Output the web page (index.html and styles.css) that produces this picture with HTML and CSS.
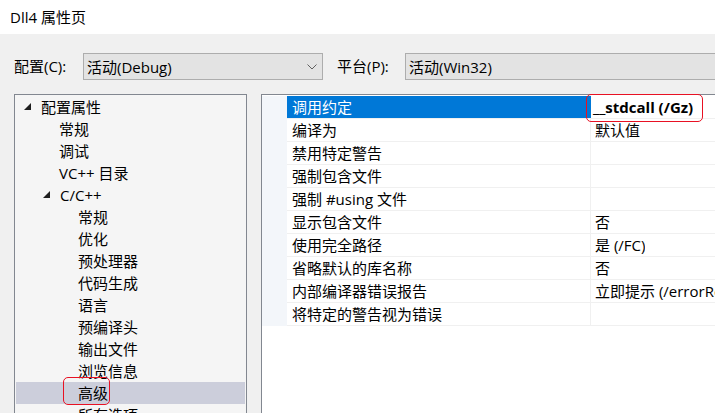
FILE: index.html
```html
<!DOCTYPE html>
<html lang="zh-CN">
<head>
<meta charset="utf-8">
<title>Dll4 属性页</title>
<link rel="stylesheet" href="styles.css">
</head>
<body>
<div class="window">
  <div class="titlebar">Dll4 属性页</div>
  <div class="main">
    <div class="config">
      <span class="label lbl-conf">配置(C):</span>
      <div class="combo combo-conf">
        <span>活动(Debug)</span>
        <svg class="chev" width="10" height="6" viewBox="0 0 10 6"><path d="M0.5 0.5 L5 5 L9.5 0.5" fill="none" stroke="#606060" stroke-width="1"/></svg>
      </div>
      <span class="label lbl-plat">平台(P):</span>
      <div class="combo combo-plat"><span>活动(Win32)</span></div>
    </div>
    <div class="panels">
      <div class="tree">
        <div class="node l0"><svg class="tri" width="8" height="8" viewBox="0 0 8 8"><polygon points="7,0 7,7 0,7" fill="#1e1e1e"/></svg>配置属性</div>
        <div class="node l1">常规</div>
        <div class="node l1">调试</div>
        <div class="node l1">VC++ 目录</div>
        <div class="node l1 exp"><svg class="tri" width="8" height="8" viewBox="0 0 8 8"><polygon points="7,0 7,7 0,7" fill="#1e1e1e"/></svg>C/C++</div>
        <div class="node l2">常规</div>
        <div class="node l2">优化</div>
        <div class="node l2">预处理器</div>
        <div class="node l2">代码生成</div>
        <div class="node l2">语言</div>
        <div class="node l2">预编译头</div>
        <div class="node l2">输出文件</div>
        <div class="node l2">浏览信息</div>
        <div class="node l2 sel">高级</div>
        <div class="node l2">所有选项</div>
        <div class="mark mark-tree"></div>
      </div>
      <div class="grid">
        <div class="row active"><div class="gut"></div><div class="name">调用约定</div><div class="val bold">__stdcall (/Gz)</div></div>
        <div class="row"><div class="gut"></div><div class="name">编译为</div><div class="val">默认值</div></div>
        <div class="row"><div class="gut"></div><div class="name">禁用特定警告</div><div class="val"></div></div>
        <div class="row"><div class="gut"></div><div class="name">强制包含文件</div><div class="val"></div></div>
        <div class="row"><div class="gut"></div><div class="name">强制 #using 文件</div><div class="val"></div></div>
        <div class="row"><div class="gut"></div><div class="name">显示包含文件</div><div class="val">否</div></div>
        <div class="row"><div class="gut"></div><div class="name">使用完全路径</div><div class="val">是 (/FC)</div></div>
        <div class="row"><div class="gut"></div><div class="name">省略默认的库名称</div><div class="val">否</div></div>
        <div class="row"><div class="gut"></div><div class="name">内部编译器错误报告</div><div class="val">立即提示 (/errorReport:prompt)</div></div>
        <div class="row"><div class="gut"></div><div class="name">将特定的警告视为错误</div><div class="val"></div></div>
        <div class="mark mark-grid"></div>
      </div>
    </div>
  </div>
</div>
</body>
</html>
```

FILE: styles.css
```css
html, body {
  margin: 0;
  padding: 0;
  overflow: hidden;
  width: 715px;
  height: 413px;
}
body {
  font-family: "Open Sans", "Noto Sans CJK SC", sans-serif;
  font-size: 15px;
  color: #000;
  background: #f0f0f0;
}
.window {
  width: 715px;
  height: 413px;
  overflow: hidden;
}
.titlebar {
  height: 34px;
  line-height: 34px;
  background: #fff;
  padding-left: 10px;
  font-size: 15px;
  color: #000;
}
.main {
  background: #f0f0f0;
  height: 379px;
}
.config {
  display: flex;
  align-items: center;
  padding-top: 19px;
  height: 27px;
  white-space: nowrap;
}
.label {
  line-height: 27px;
  flex-shrink: 0;
}
.lbl-conf {
  margin-left: 14px;
  width: 69px;
}
.lbl-plat {
  margin-left: 14px;
  width: 68px;
}
.combo {
  box-sizing: border-box;
  height: 27px;
  border: 1px solid #adadad;
  background: #e3e3e3;
  display: flex;
  align-items: center;
  padding-left: 3px;
  flex-shrink: 0;
}
.combo-conf {
  width: 240px;
  justify-content: space-between;
  padding-right: 5px;
}
.combo-plat {
  width: 330px;
}
.chev {
  display: block;
}
.panels {
  display: flex;
  margin-top: 14px;
  align-items: flex-start;
}
.tree {
  position: relative;
  box-sizing: border-box;
  flex-shrink: 0;
  margin-left: 14px;
  width: 233px;
  height: 330px;
  border: 1px solid #828790;
  background: #f5f5f5;
  padding: 1px 1px 0 1px;
  white-space: nowrap;
  overflow: hidden;
}
.node {
  height: 22px;
  line-height: 22px;
  display: flex;
  align-items: center;
}
.tri {
  display: block;
  flex-shrink: 0;
  margin-right: 9px;
  margin-top: -1px;
}
.l0 { padding-left: 8px; }
.l1 { padding-left: 43px; }
.l1.exp { padding-left: 27px; }
.l2 { padding-left: 62px; }
.sel {
  background: #cccedb;
}
.grid {
  position: relative;
  box-sizing: border-box;
  flex-shrink: 0;
  margin-left: 14px;
  width: 470px;
  height: 330px;
  border: 1px solid #828790;
  border-right: none;
  background: #fff;
  padding-top: 1px;
  white-space: nowrap;
}
.row {
  display: flex;
  height: 22px;
  line-height: 22px;
  border-bottom: 1px solid #f0f0f0;
}
.gut {
  width: 25px;
  flex-shrink: 0;
  background: #f3f6fa;
  margin-bottom: -1px;
}
.name {
  box-sizing: border-box;
  width: 304px;
  flex-shrink: 0;
  padding-left: 5px;
  border-right: 1px solid #f0f0f0;
}
.val {
  padding-left: 4px;
  overflow: hidden;
}
.active .name {
  background: #0078d7;
  color: #fff;
  border-right-color: #0078d7;
}
.bold {
  font-weight: 700;
  padding-left: 2px;
}
.mark {
  position: absolute;
  border: 1px solid #e81123;
  border-radius: 5px;
  pointer-events: none;
}
.mark-tree {
  left: 48px;
  top: 282px;
  width: 45px;
  height: 26px;
}
.mark-grid {
  left: 324px;
  top: -1px;
  width: 115px;
  height: 26px;
}
```
